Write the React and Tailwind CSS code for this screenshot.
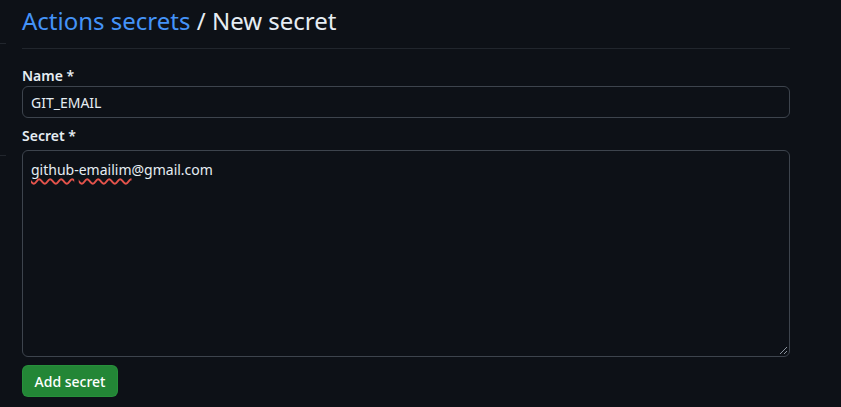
import React from "react";

export default function App() {
  return (
    <div
      className="min-h-[407px] w-full bg-[#0d1117] text-[#e6edf3] flex"
      style={{ fontFamily: '"Noto Sans", "Open Sans", sans-serif' }}
    >
      <div className="w-[6px] shrink-0 relative">
        <div className="absolute left-0 top-[43px] h-px w-[6px] bg-[#21262d]" />
        <div className="absolute left-0 top-[155px] h-px w-[6px] bg-[#21262d]" />
      </div>
      <div className="ml-[16px] w-[768px] flex flex-col">
        <h1 className="pt-[3px] pb-[9px] border-b border-[#21262d] text-[24px] leading-[36px] font-normal">
          <span className="text-[#4493f8]">Actions secrets</span>
          <span className="text-[#e6edf3]"> / New secret</span>
        </h1>
        <label className="mt-[16px] text-[14px] leading-[21px] font-semibold">Name *</label>
        <div className="mt-[0px] h-[32px] rounded-[6px] border border-[#3d444d] bg-[#0d1117] flex items-center px-[8px] text-[14px]">
          GIT_EMAIL
        </div>
        <label className="mt-[7px] text-[14px] leading-[21px] font-semibold">Secret *</label>
        <div className="relative mt-[4px] h-[207px] rounded-[6px] border border-[#3d444d] bg-[#0d1117] px-[8px] pt-[9px] text-[14px] leading-[20px]">
          <span className="underline decoration-wavy decoration-[#e5534b] decoration-[1.5px] underline-offset-[3px]">github</span>
          -
          <span className="underline decoration-wavy decoration-[#e5534b] decoration-[1.5px] underline-offset-[3px]">emailim</span>
          @gmail.com
          <svg className="absolute right-[1px] bottom-[1px]" width="9" height="9" viewBox="0 0 9 9">
            <path d="M8 1 L1 8 M8 5 L5 8" stroke="#8b949e" strokeWidth="1" />
          </svg>
        </div>
        <div className="mt-[8px]">
          <button className="h-[32px] w-[96px] rounded-[6px] bg-[#238636] border border-[#2ea043]/40 text-white text-[14px] font-medium flex items-center justify-center">
            Add secret
          </button>
        </div>
      </div>
    </div>
  );
}
